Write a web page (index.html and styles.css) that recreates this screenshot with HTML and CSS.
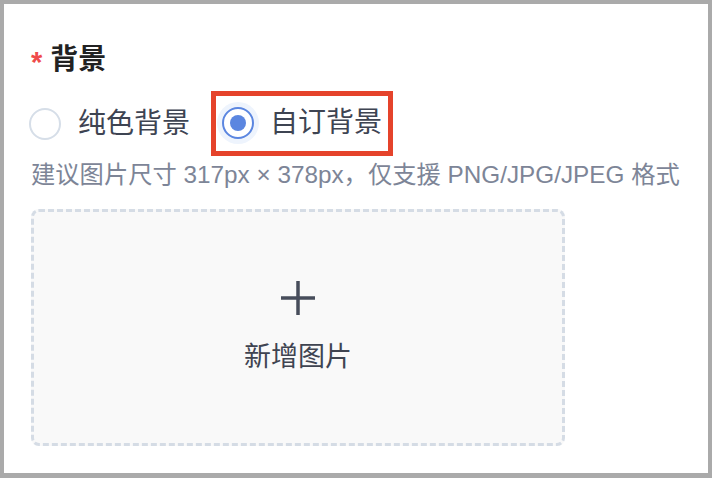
FILE: index.html
```html
<!DOCTYPE html>
<html>
<head>
    <meta charset="utf-8">
    <title>背景设置</title>
    <link rel="stylesheet" href="styles.css">
</head>
<body>
    <div class="panel">
        <div class="form-item">
            <div class="form-label"><span class="required">*</span>背景</div>
            <div class="radio-group">
                <label class="radio">
                    <span class="radio-circle"></span>
                    <span class="radio-text">纯色背景</span>
                </label>
                <label class="radio checked marked">
                    <span class="radio-circle"></span>
                    <span class="radio-text">自订背景</span>
                </label>
            </div>
            <p class="hint">建议图片尺寸 317px × 378px，仅支援 PNG/JPG/JPEG 格式</p>
            <div class="upload">
                <svg class="upload-icon" width="36" height="36" viewBox="0 0 36 36">
                    <path d="M18 1v34M1 18h34" stroke="#474d5b" stroke-width="3.5" fill="none"/>
                </svg>
                <span class="upload-text">新增图片</span>
            </div>
        </div>
    </div>
</body>
</html>
```

FILE: styles.css
```css
* {
    box-sizing: border-box;
}
body {
    margin: 0;
    font-family: "Liberation Sans", "Noto Sans CJK SC", sans-serif;
    background-color: #fff;
}
.panel {
    width: 712px;
    height: 478px;
    border: 4px solid #aaaaaa;
    border-bottom-width: 5px;
    background-color: #fff;
    padding: 37px 0 0 27px;
}
.form-label {
    font-size: 28px;
    line-height: 38px;
    font-weight: bold;
    color: #222;
    display: flex;
    align-items: center;
}
.required {
    color: #ef4b4b;
    font-size: 29px;
    margin-right: 8px;
    position: relative;
    top: 2px;
    font-weight: bold;
}
.radio-group {
    display: flex;
    align-items: center;
    margin: 12px 0 0 -2px;
    gap: 21px;
}
.radio {
    display: flex;
    align-items: center;
    font-size: 28px;
    line-height: 39px;
    color: #3e4452;
    cursor: pointer;
}
.radio-circle {
    width: 32px;
    height: 32px;
    border: 2px solid #d6dee8;
    border-radius: 50%;
    margin-right: 17px;
    position: relative;
    background-color: #fff;
}
.radio.checked .radio-circle {
    border-color: #5b86e0;
    box-shadow: 0 0 0 5px #eef4fd;
    margin-right: 16px;
}
.radio.checked .radio-circle::after {
    content: "";
    position: absolute;
    width: 16px;
    height: 16px;
    left: 6px;
    top: 6px;
    border-radius: 50%;
    background-color: #5b86e0;
}
.radio.marked {
    border: 5px solid #e5432b;
    padding: 7px 6px 9px 6px;
}
.hint {
    margin: 4px 0 0;
    font-size: 24.3px;
    line-height: 30px;
    color: #7d8597;
}
.upload {
    margin-top: 19px;
    width: 534px;
    height: 237px;
    border: 3px dashed #d5dce5;
    border-radius: 8px;
    background-color: #f9f9f9;
    display: flex;
    flex-direction: column;
    align-items: center;
    justify-content: center;
}
.upload-icon {
    display: block;
}
.upload-text {
    margin-top: 22px;
    font-size: 27px;
    line-height: 38px;
    color: #3f4451;
}
```
